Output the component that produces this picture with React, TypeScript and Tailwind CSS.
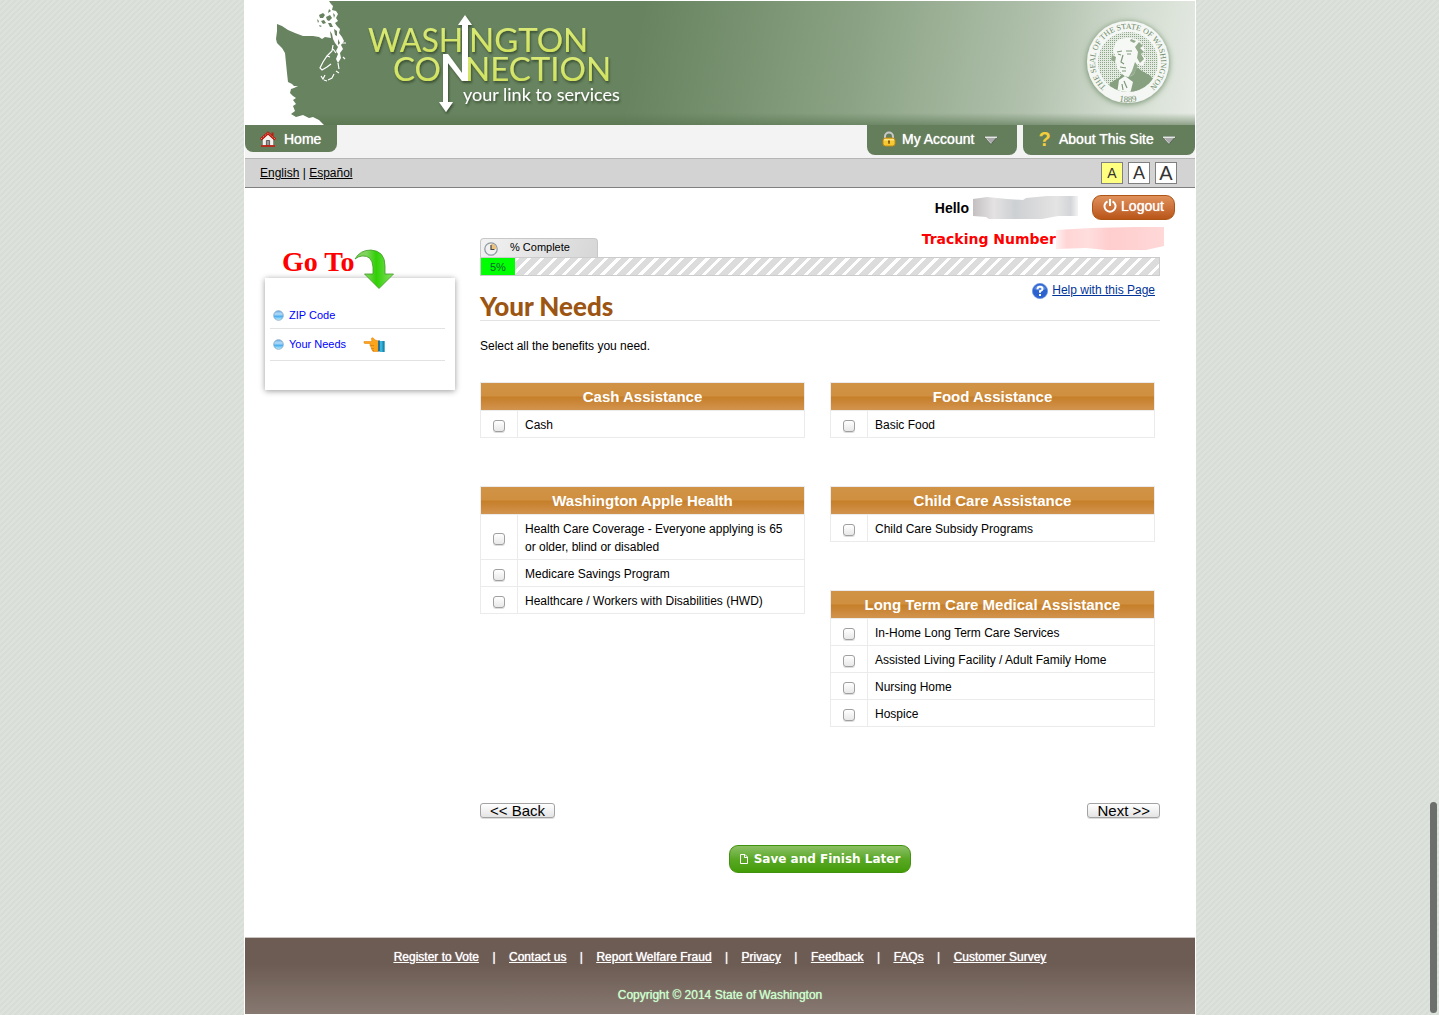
import React from "react";

const arial = "font-['Liberation_Sans',Arial,sans-serif]";

function StateMap() {
  return (
    <svg viewBox="0 0 110 124" className="h-[124px] w-[110px] shrink-0" role="img" aria-label="Washington State">
      <path
        fill="#fff"
        d="M0 0H84L86 3L88 5L87 9L91 10L93 13L91 17L93 20L90 22L92 25L95 28L94 32L97 36L99 40L96 44L98 48L95 52L96 57L93 62L91 58L93 53L91 50L93 46L90 42L88 38L87 33L85 30L86 37L80 36L77 38L74 36L68 35L58 35L50 32L43 29L37 25L32 23L32 30L31 38L32 42L37 47L40 52L41 62L42 72L43 81L47 83L49 85L53 85L49 87L46 88L45 92L48 95L51 97L48 99L51 103L48 105L50 110L46 113L51 116L58 114L64 117L68 116L74 119L79 124H0Z"
      />
      <path
        fill="none"
        stroke="#fff"
        strokeWidth="1.200"
        d="M88 44L87 50L82 55L78 61L75 67L77 69L82 66L86 63M82 55L85 56M76 75L78 78L80 74M83 79L87 77L89 73M93 62L94 68M98 56L100 58M91 70L94 72M97 42L101 42M88 48L91 52M79 79L82 80"
      />
      <path
        fill="#67835f"
        d="M74 14L78 12L80 14L78 17L75 17ZM81 16L85 14L87 17L84 20L82 19ZM76 20L79 19L81 22L78 23ZM83 22L86 22L88 26L85 26ZM72 18L74 20L73 22ZM89 28L92 30L92 35L90 34ZM84 8L86 10L83 12ZM93 38L95 42L93 44ZM74 24L77 25L75 26ZM88 12L90 14L89 17Z"
      />
    </svg>
  );
}

function Wordmark() {
  return (
    <svg viewBox="0 0 270 110" className="h-[110px] w-[270px]" role="img" aria-label="Washington Connection, your link to services">
      <defs>
        <linearGradient id="lime" x1="0" y1="0" x2="0" y2="1">
          <stop offset="0" stopColor="#dcec7c" />
          <stop offset="1" stopColor="#cfe05a" />
        </linearGradient>
        <filter id="shade" x="-10%" y="-10%" width="120%" height="130%">
          <feDropShadow dx="1" dy="2" stdDeviation="1" floodColor="#263a20" floodOpacity="0.7" />
        </filter>
      </defs>
      <g filter="url(#shade)" fontFamily="Lato, sans-serif">
        <g fill="url(#lime)" fontSize="33">
          <text x="5" y="47" fontSize="32">WASH</text>
          <text x="106" y="47">NGTON</text>
          <text x="30" y="76">CO</text>
          <text x="102" y="76">NECTION</text>
        </g>
        <g fill="#fff">
          <path d="M99 75V20H95L102 10L109 20H105V76H99L85 58V97H90L83 107L76 97H80V49H85L99 68Z" />
          <text x="100" y="96" fontSize="18">your link to services</text>
        </g>
      </g>
    </svg>
  );
}

function Seal() {
  return (
    <svg viewBox="0 0 96 96" className="h-24 w-24" role="img" aria-label="The Seal of the State of Washington 1889">
      <defs>
        <filter id="glow" x="-20%" y="-20%" width="140%" height="140%">
          <feDropShadow dx="0" dy="1" stdDeviation="3" floodColor="#5f8259" floodOpacity="0.9" />
        </filter>
        <pattern id="mesh" width="2" height="2" patternUnits="userSpaceOnUse">
          <rect width="2" height="2" fill="#e3eae1" />
          <rect width="1" height="1" fill="#8da687" />
        </pattern>
        <path id="ring" d="M24.700 71.300A33 33 0 1 1 71.300 71.300" />
        <path id="ringBottom" d="M30 84A40 40 0 0 0 66 84" />
        <clipPath id="disc">
          <circle cx="48" cy="48" r="30" />
        </clipPath>
      </defs>
      <circle cx="48" cy="48" r="41" fill="#f4f7f3" filter="url(#glow)" />
      <circle cx="48" cy="48" r="30" fill="url(#mesh)" />
      <g clipPath="url(#disc)">
        <path fill="#86a080" d="M26 80L30 69L40 63L44 56L58 54L62 57L71 62L79 80Z" />
        <path fill="#f6f8f5" d="M37 80L39 66L45 62L53 68L50 80Z" />
        <path fill="#f6f8f5" d="M35 30Q38 23 48 24Q58 23 62 30L65 36L62 40L66 45L63 52L58 50L54 60Q48 66 42 60L37 54L36 48L32 46L35 41L33 37Z" />
        <path fill="#93aa8d" d="M59 28L63 32L60 34L64 38L61 40L64 45L60 49L57 44L58 38L55 33ZM32 41L36 43L35 48L31 46ZM55 48L58 52L54 60L48 64L52 57ZM51 25L56 27L54 29L50 27Z" />
        <path fill="none" stroke="#7f997a" strokeWidth="1.200" d="M37 38L42 37M46 37L52 37M38 40L41 41M47 40L51 40M43 41L41 48L44 50M40 53L46 54M42 57L46 57M44 67L47 74M42 70L43 76" />
      </g>
      <g fill="#6f8a69" fontFamily="'Liberation Serif', serif">
        <text fontSize="8" textAnchor="middle">
          <textPath href="#ring" startOffset="50%">THE SEAL OF THE STATE OF WASHINGTON</textPath>
        </text>
        <text fontSize="9" textAnchor="middle">
          <textPath href="#ringBottom" startOffset="50%">1889</textPath>
        </text>
      </g>
    </svg>
  );
}

function HouseIcon() {
  return (
    <svg viewBox="0 0 16 16" className="h-4 w-4">
      <path fill="#f5f2ee" stroke="#777" strokeWidth=".6" d="M2.500 8L8 3L13.500 8V14.500H2.500Z" />
      <path fill="#999" stroke="#444" strokeWidth=".8" d="M6.400 9.500H9.600V14.500H6.400Z" />
      <path fill="#b82015" d="M11.500 1.500H13.500V5H11.500Z" />
      <path fill="none" stroke="#b8180e" strokeWidth="2.600" d="M.8 8.500L8 2L15.200 8.500" />
      <path fill="none" stroke="#f08a76" strokeWidth="1" strokeDasharray="1.500 1" d="M1 8L8 1.800L15 8" />
      <path stroke="#c8180e" strokeWidth="1.600" d="M1 15H15" />
    </svg>
  );
}

function LockIcon() {
  return (
    <svg viewBox="0 0 14 16" className="h-4 w-[14px]">
      <path fill="none" stroke="#c9c9c9" strokeWidth="2" d="M3 8V5.500A4 4 0 0 1 11 5.500V8" />
      <rect x="1" y="7" width="12" height="8" rx="2.500" fill="#f5c931" stroke="#c48a12" />
      <path fill="#fbe584" d="M2 8H12V9.500H2Z" />
      <path fill="#8a5a08" d="M6 9.500H8V11L7.500 13H6.500L6 11Z" />
    </svg>
  );
}

function Caret() {
  return (
    <svg viewBox="0 0 14 9" className="mt-[3px] h-[9px] w-[14px]">
      <path fill="#a9a9a9" stroke="#4a5a48" strokeWidth=".8" d="M.8 1H13.200L7 8.300Z" />
      <path stroke="#fff" strokeWidth="1.200" d="M1 1.200H13" />
      <path stroke="#e4e4e4" strokeWidth=".8" d="M2.500 2.500L7 7.500" />
    </svg>
  );
}

const navTab =
  "flex items-center rounded-b-lg bg-[#647e5b] text-sm text-white [text-shadow:0_0_1px_#fff]";

function Header() {
  return (
    <header>
      <div className="relative flex h-[125px] overflow-hidden border-t border-white bg-[linear-gradient(100deg,#67835f_0%,#67835f_41%,#8ba384_64%,#b0c0ac_82%,#d3dcd0_92%,#e6ebe4_100%)]">
        <div className="absolute inset-x-0 bottom-0 h-3 bg-linear-to-b from-transparent to-[#55724d]/60" />
        <div className="relative flex w-full items-start">
          <StateMap />
          <div className="pt-1 pl-2">
            <Wordmark />
          </div>
          <div className="mt-[13px] mr-[19px] ml-auto">
            <Seal />
          </div>
        </div>
      </div>
      <nav className="flex h-[33px] items-start gap-[6px] bg-[#f3f3f3]">
        <a href="#home" className={`${navTab} mr-auto h-[27px] gap-2 pr-4 pl-[15px]`}>
          <HouseIcon />
          <span>Home</span>
        </a>
        <button type="button" className={`${navTab} h-[30px] w-[150px] gap-[6px] pb-[2px] pl-[15px]`}>
          <LockIcon />
          <span className="mr-1">My Account</span>
          <Caret />
        </button>
        <button type="button" className={`${navTab} h-[30px] w-[172px] pb-[2px] pl-[15px]`}>
          <span className="mr-2 w-[13px] text-xl leading-none font-bold text-[#f2cf3b] [text-shadow:none]">?</span>
          <span className="mr-2">About This Site</span>
          <Caret />
        </button>
      </nav>
      <div className="flex h-[30px] items-center justify-between border-t border-b border-t-[#b5b5b5] border-b-[#808080] bg-[#d3d3d3] pr-[18px] pl-[15px] text-xs">
        <p>
          <a href="#en" className="underline">English</a> | <a href="#es" className="underline">Español</a>
        </p>
        <div className="flex gap-[5px] text-[#333] [text-shadow:0_0_1px_#333]">
          <button type="button" aria-label="Small text" className="h-[22px] w-[22px] border border-[#808080] bg-[#ffff80] text-sm leading-5">A</button>
          <button type="button" aria-label="Medium text" className="h-[22px] w-[22px] border border-[#808080] bg-white text-lg leading-5">A</button>
          <button type="button" aria-label="Large text" className="h-[22px] w-[22px] border border-[#808080] bg-white text-xl leading-5">A</button>
        </div>
      </div>
    </header>
  );
}

function Bullet() {
  return (
    <svg viewBox="0 0 11 11" className="h-[11px] w-[11px] shrink-0">
      <defs>
        <linearGradient id="bead" x1="0" y1="0" x2="0" y2="1">
          <stop offset="0" stopColor="#6aaee8" />
          <stop offset=".35" stopColor="#b5dcf8" />
          <stop offset=".6" stopColor="#4fb0f0" />
          <stop offset="1" stopColor="#c8f8ff" />
        </linearGradient>
      </defs>
      <circle cx="5.500" cy="5.500" r="4.800" fill="url(#bead)" stroke="#7fa3c4" strokeWidth=".8" />
    </svg>
  );
}

function PointingHand() {
  return (
    <svg viewBox="0 0 22 16" className="h-4 w-[22px]">
      <path
        fill="#fba51c"
        stroke="#e8860c"
        strokeWidth=".6"
        d="M1 4.500Q.5 6.500 2 6.500H7L7 8.500L8 10L8.500 12L10 14.500H15L15.500 4L12 3L10 .8Q8 .5 8.500 2.500L9 4.500Z"
      />
      <path fill="none" stroke="#d9780a" strokeWidth=".7" d="M7.500 8.500H11M8.300 11.500H11M9.300 13.500H11" />
      <path fill="#2a6f94" d="M15 3.500H17V14.500H15Z" />
      <path fill="#35b6dc" d="M17 4H21.500V15H17Z" />
      <path fill="#1f86ad" d="M19.500 4H21.500V15H19.500Z" />
    </svg>
  );
}

function Sidebar() {
  return (
    <aside className="w-[190px] shrink-0 pt-[56px]">
      <div className="relative z-10 flex h-[34px] items-start pl-[17px]">
        <h2 className="font-['Liberation_Serif','Times_New_Roman',serif] text-[28px] leading-9 font-bold text-[#f00]">Go To</h2>
        <svg viewBox="0 0 40 40" className="mt-[5px] h-10 w-10 shrink-0">
          <defs>
            <linearGradient id="leaf" x1="0" y1="0" x2="1" y2="0">
              <stop offset=".3" stopColor="#7fd45b" />
              <stop offset=".55" stopColor="#2fd005" />
              <stop offset="1" stopColor="#8be066" />
            </linearGradient>
          </defs>
          <path
            fill="url(#leaf)"
            stroke="#3f9a24"
            strokeWidth=".8"
            d="M1 10Q6 1 17 1Q31 2 31 17V25H39.500L25 39.500L10.500 25H19V18Q18 6 8 7Q4 7.500 1 10Z"
          />
        </svg>
      </div>
      <ul className="min-h-[112px] bg-white pt-6 pr-[10px] pl-[5px] text-[11px] text-[#00f] shadow-[0_1px_6px_rgba(0,0,0,0.4)]">
        <li className="flex h-[27px] items-center gap-[5px] border-b border-[#e2e2e2] pl-[3px]">
          <Bullet />
          <a href="#zip">ZIP Code</a>
        </li>
        <li className="flex h-8 items-center gap-[5px] border-b border-[#e2e2e2] pl-[3px]">
          <Bullet />
          <a href="#needs">Your Needs</a>
          <span className="pl-3">
            <PointingHand />
          </span>
        </li>
      </ul>
    </aside>
  );
}

type Group = { title: string; items: string[] };

const leftGroups: Group[] = [
  { title: "Cash Assistance", items: ["Cash"] },
  {
    title: "Washington Apple Health",
    items: [
      "Health Care Coverage - Everyone applying is 65 or older, blind or disabled",
      "Medicare Savings Program",
      "Healthcare / Workers with Disabilities (HWD)",
    ],
  },
];

const rightGroups: Group[] = [
  { title: "Food Assistance", items: ["Basic Food"] },
  { title: "Child Care Assistance", items: ["Child Care Subsidy Programs"] },
  {
    title: "Long Term Care Medical Assistance",
    items: [
      "In-Home Long Term Care Services",
      "Assisted Living Facility / Adult Family Home",
      "Nursing Home",
      "Hospice",
    ],
  },
];

function BenefitTable({ title, items }: Group) {
  return (
    <table className="w-full border-collapse border border-[#ebebeb] text-xs leading-[18px]">
      <thead>
        <tr>
          <th
            colSpan={2}
            className="h-7 border border-[#ebebeb] bg-[linear-gradient(#d09345_0%,#cf8f40_48%,#c67f29_50%,#d29450_100%)] p-0 text-[15px] font-bold text-white"
          >
            {title}
          </th>
        </tr>
      </thead>
      <tbody>
        {items.map((item) => {
          const id = item.toLowerCase().replace(/[^a-z]+/g, "-");
          return (
            <tr key={item}>
              <td className="w-[37px] border border-[#ebebeb] p-0 text-center">
                <input
                  id={id}
                  type="checkbox"
                  className="mx-auto mt-[3px] block h-3 w-3 appearance-none rounded-[3px] border border-[#a0a0a0] bg-linear-to-b from-white to-[#e8e8e8] shadow-[0_1px_0_#ddd]"
                />
              </td>
              <td className="border border-[#ebebeb] pt-[5px] pr-3 pb-[3px] pl-[7px]">
                <label htmlFor={id}>{item}</label>
              </td>
            </tr>
          );
        })}
      </tbody>
    </table>
  );
}

const plainButton =
  "h-[15px] rounded-[3px] border border-[#a3a3a3] bg-linear-to-b from-white to-[#e4e4e4] px-[9px] text-[15px] leading-[13px] shadow-[0_1px_0_#ddd]";

function Content() {
  return (
    <main className="min-w-0 flex-1 pl-[25px]">
      <div className="flex items-center justify-end pt-[6px]">
        <p className="pt-px text-sm font-bold">Hello</p>
        <svg viewBox="0 0 108 26" className="ml-[3px] h-[26px] w-[108px]">
          <defs>
            <linearGradient id="smudge">
              <stop offset="0" stopColor="#c4c0c2" />
              <stop offset=".2" stopColor="#e4e2e3" />
              <stop offset=".4" stopColor="#cdd0d3" />
              <stop offset=".65" stopColor="#dcdcdd" />
              <stop offset=".8" stopColor="#e4e4e4" />
              <stop offset=".93" stopColor="#d3d5d8" />
              <stop offset="1" stopColor="#f4f4f4" />
            </linearGradient>
          </defs>
          <path fill="url(#smudge)" d="M1 5L15 3L35 5L51 6L54 4L75 2H106V22H86L70 25L17 25L14 23L1 22Z" />
        </svg>
        <button
          type="button"
          className="mr-5 ml-[12px] flex h-[25px] w-[83px] items-center justify-center gap-1 rounded-[9px] border border-[#ad5517] bg-linear-to-b from-[#e0915a] to-[#b95516] pb-[2px] text-sm text-white [text-shadow:0_0_1px_#fff]"
        >
          <svg viewBox="0 0 14 14" className="h-[14px] w-[14px]" fill="none" stroke="#fff" strokeWidth="2">
            <path d="M4.500 2.300A5.500 5.500 0 1 0 9.500 2.300M7 0V7" />
          </svg>
          Logout
        </button>
      </div>
      <div className="pr-[35px]">
        <div className="flex h-[37px] items-end justify-between">
          <div className="flex h-[19px] w-[118px] items-center gap-3 rounded-t-[4px] border border-b-0 border-[#c8c8c8] bg-[linear-gradient(115deg,#f2f2f2,#d6d6d6)] pl-[3px] text-[11px]">
            <svg viewBox="0 0 14 14" className="mt-[2px] h-[14px] w-[14px]">
              <circle cx="7" cy="7" r="6.200" fill="#f1f1f1" stroke="#929ba5" strokeWidth="1.300" />
              <path fill="#eac17d" d="M7 7V1.500A5.500 5.500 0 0 1 12.500 7Z" />
              <path fill="none" stroke="#444" strokeWidth="1.200" d="M7 3V7.500H10.500" />
            </svg>
            <span className="pb-[2px]">% Complete</span>
          </div>
          <div className="-mr-1 flex items-center self-start pt-[6px]">
            <p className="font-['DejaVu_Sans',Verdana,sans-serif] text-sm font-bold text-[#f00]">Tracking Number</p>
            <svg viewBox="0 0 108 25" className="h-[25px] w-[108px]">
              <defs>
                <linearGradient id="blush">
                  <stop offset="0" stopColor="#fff0f0" />
                  <stop offset=".1" stopColor="#ffd5d5" />
                  <stop offset=".3" stopColor="#ffdede" />
                  <stop offset=".5" stopColor="#ffcdcd" />
                  <stop offset="1" stopColor="#ffd8d8" />
                </linearGradient>
              </defs>
              <path fill="url(#blush)" d="M0 4L35 2L80 1H108V20L90 24H50L30 22L0 23Z" />
            </svg>
          </div>
        </div>
        <div role="progressbar" aria-valuenow={5} aria-label="Percent complete" className="flex h-[19px] border border-[#ccc] bg-[repeating-linear-gradient(135deg,#dcdcdc_0px,#dcdcdc_6px,#fff_6px,#fff_9px)]">
          <div className="w-[5%] bg-[#0f0] text-center text-[11px] leading-[18px] text-[#063]">5%</div>
        </div>
        <div className="flex h-[45px] items-end justify-between border-b border-[#e3e3e3]">
          <h1 className="font-[Lato,'Gill_Sans',sans-serif] text-[26px] leading-7 font-black text-[#9c5512]">Your Needs</h1>
          <a href="#help" className="mt-[5px] mr-[5px] flex items-center gap-1 self-start text-xs text-[#003399]">
            <svg viewBox="0 0 16 16" className="mt-[2px] h-4 w-4">
              <circle cx="8" cy="8" r="7.600" fill="#2b62cf" stroke="#6c94dd" strokeWidth=".8" />
              <path fill="#6f9cec" d="M2 6A6.500 6.500 0 0 1 14 6Q8 9 2 6Z" opacity=".6" />
              <path fill="none" stroke="#fff" strokeWidth="2" d="M5.500 6.200Q5.500 3.800 8 3.800T10.500 6Q10.500 7.300 8 8.300V9.800M8 11V13" />
            </svg>
            <span className="underline">Help with this Page</span>
          </a>
        </div>
        <p className="pt-4 text-xs leading-[18px]">Select all the benefits you need.</p>
        <div className="mt-[27px] grid grid-cols-2 gap-[25px] pr-[5px]">
          {[leftGroups, rightGroups].map((groups, i) => (
            <div key={i} className="flex flex-col gap-12">
              {groups.map((g) => (
                <BenefitTable key={g.title} {...g} />
              ))}
            </div>
          ))}
        </div>
        <div className="mt-[76px] flex justify-between">
          <button type="button" className={plainButton}>&lt;&lt; Back</button>
          <button type="button" className={plainButton}>Next &gt;&gt;</button>
        </div>
        <div className="mt-[27px] mb-16 flex justify-center">
          <button
            type="button"
            className="flex h-7 items-center justify-center gap-[6px] rounded-[9px] border border-[#41920d] bg-linear-to-b from-[#8cc063] via-[#5aa824] to-[#429d05] px-[10px] font-['DejaVu_Sans',Verdana,sans-serif] text-xs font-bold text-white"
          >
            <svg viewBox="0 0 8 10" className="h-[10px] w-2" fill="none" stroke="#fff">
              <path d="M.5 .5H5L7.500 3V9.500H.5ZM4.500 .5V3.500H7.500" />
            </svg>
            Save and Finish Later
          </button>
        </div>
      </div>
    </main>
  );
}

const footerLinks = [
  "Register to Vote",
  "Contact us",
  "Report Welfare Fraud",
  "Privacy",
  "Feedback",
  "FAQs",
  "Customer Survey",
];

function Footer() {
  return (
    <footer className="border-t border-[#c9c4c0] bg-[linear-gradient(#6c5c53_0%,#6c5c53_35%,#877871_100%)] pt-[10px] pb-[10px] text-center text-xs leading-[18px]">
      <ul className="flex justify-center text-white [text-shadow:0_0_1px_#fff]">
        {footerLinks.map((label, i) => (
          <li key={label} className="flex">
            {i > 0 && <span className="w-[30px] text-center">|</span>}
            <a href="#footer" className="underline">{label}</a>
          </li>
        ))}
      </ul>
      <p className="mt-5 text-[#ccffcc] [text-shadow:0_0_1px_#ccffcc]">Copyright © 2014 State of Washington</p>
    </footer>
  );
}

export default function App() {
  return (
    <div className={`${arial} relative min-h-screen bg-[linear-gradient(135deg,#dde2dd_25%,#d7ddd7_25%,#d7ddd7_50%,#dde2dd_50%,#dde2dd_75%,#d7ddd7_75%)] bg-[size:6px_6px] pl-px text-black`}>
      <div className="mx-auto w-full max-w-[952px] border-x border-b border-white bg-white">
        <Header />
        <div className="flex pl-5">
          <Sidebar />
          <Content />
        </div>
        <Footer />
      </div>
      <div className="fixed right-[2px] bottom-[2px] h-[211px] w-[7px] rounded-full bg-[#6c6f6c]" />
    </div>
  );
}
